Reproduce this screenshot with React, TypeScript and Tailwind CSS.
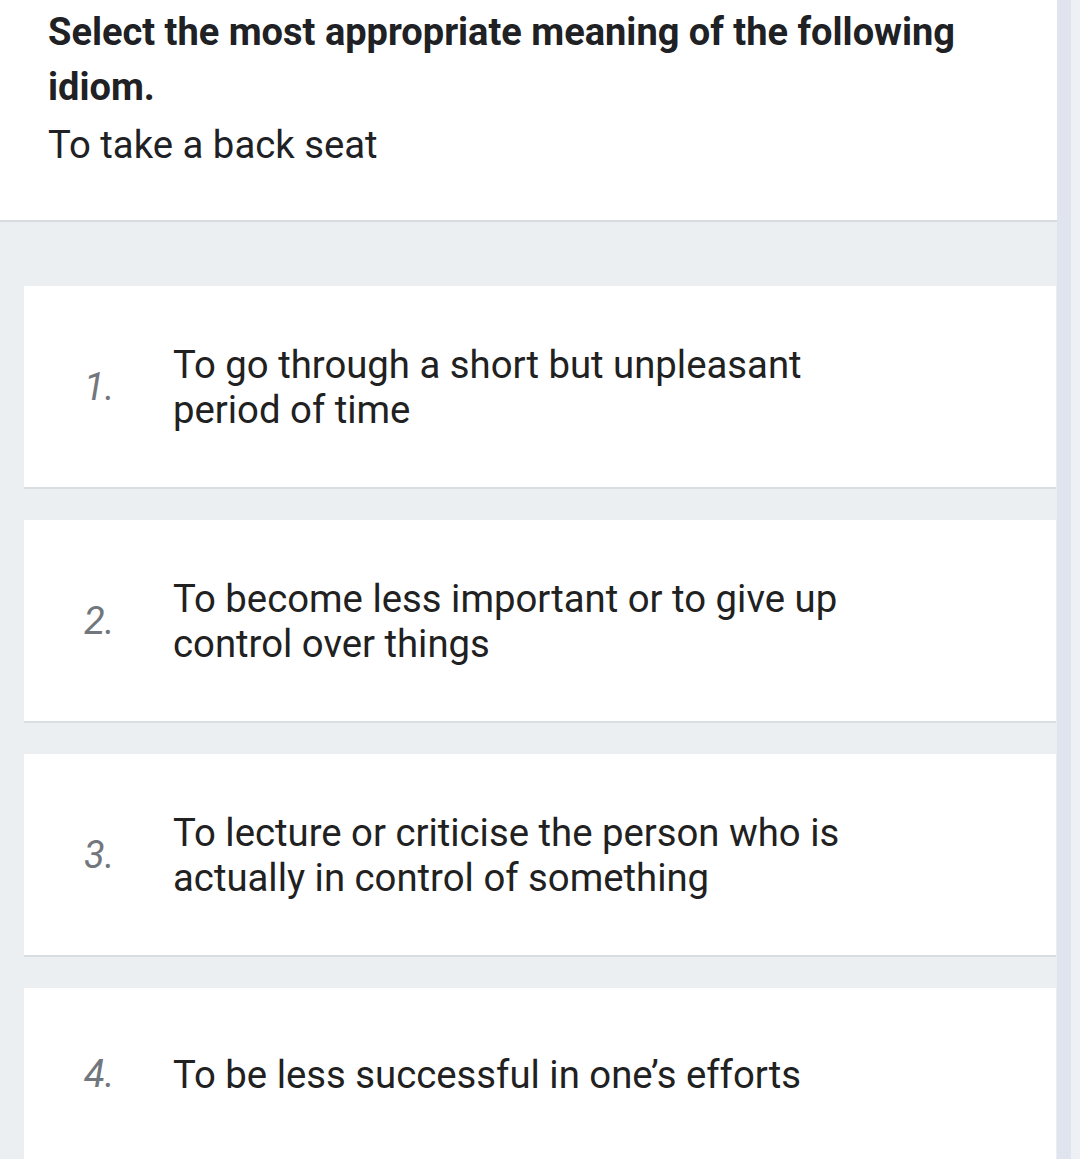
const options = [
  'To go through a short but unpleasant period of time',
  'To become less important or to give up control over things',
  'To lecture or criticise the person who is actually in control of something',
  'To be less successful in one\u2019s efforts',
];

function OptionCard({ index, text }: { index: number; text: string }) {
  return (
    <div className="ml-[24px] mr-[1px] bg-white border-b-2 border-[#d9dee3] pt-[56px] pb-[55px]">
      <div className="flex items-center min-h-[61px]">
        <span className="pl-[60px] w-[149px] shrink-0 italic text-[38px] leading-[45px] text-[#72767d]">
          {index}.
        </span>
        <p className="pr-[60px] text-[38.3px] leading-[45px] text-[#212121] max-w-[780px]">{text}</p>
      </div>
    </div>
  );
}

export default function App() {
  return (
    <div className="flex min-h-[1159px] bg-[#edf0f4] font-['Roboto',sans-serif]">
      <div className="flex-1 flex flex-col bg-[#ebeff2] overflow-hidden">
        {/* Question header */}
        <div className="bg-white border-b-2 border-[#d5dbe0] pl-12 pr-6 pt-[5px] pb-[53px]">
          <h1 className="font-bold text-[38px] leading-[55px] text-[#202124]">
            Select the most appropriate meaning of the following idiom.
          </h1>
          <p className="mt-[7px] text-[38.3px] leading-[45px] text-[#202124]">To take a back seat</p>
        </div>

        {/* Options */}
        <div className="flex flex-col gap-[31px] pt-[64px]">
          {options.map((o, i) => (
            <OptionCard key={i} index={i + 1} text={o} />
          ))}
        </div>
      </div>
      <div className="w-[14px] bg-[#e0e4ee]" />
      <div className="w-[9px] bg-[#edf0f4]" />
    </div>
  );
}
